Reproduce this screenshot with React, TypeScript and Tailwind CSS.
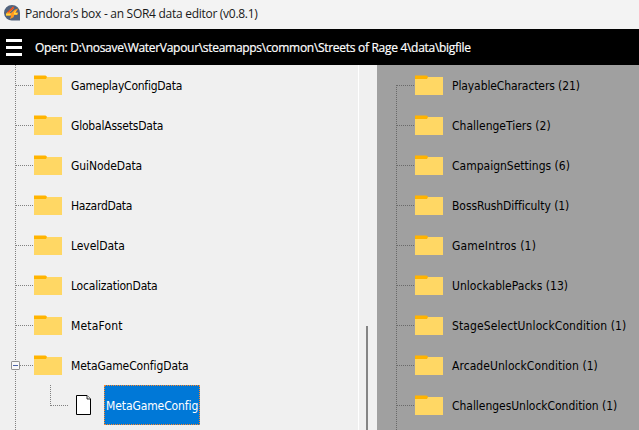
import React from "react";

type Item = { label: string; tracking: string; expanded?: boolean };

const files: Item[] = [
  { label: "GameplayConfigData", tracking: "tracking-[-0.24px]" },
  { label: "GlobalAssetsData", tracking: "tracking-[-0.2px]" },
  { label: "GuiNodeData", tracking: "tracking-[-0.1px]" },
  { label: "HazardData", tracking: "tracking-[-0.27px]" },
  { label: "LevelData", tracking: "tracking-[-0.05px]" },
  { label: "LocalizationData", tracking: "tracking-[-0.2px]" },
  { label: "MetaFont", tracking: "tracking-[0.16px]" },
  { label: "MetaGameConfigData", tracking: "tracking-[-0.1px]", expanded: true },
];

const fields: Item[] = [
  { label: "PlayableCharacters (21)", tracking: "tracking-[-0.1px]" },
  { label: "ChallengeTiers (2)", tracking: "tracking-[0px]" },
  { label: "CampaignSettings (6)", tracking: "tracking-[0px]" },
  { label: "BossRushDifficulty (1)", tracking: "tracking-[-0.06px]" },
  { label: "GameIntros (1)", tracking: "tracking-[0.18px]" },
  { label: "UnlockablePacks (13)", tracking: "tracking-[0.03px]" },
  { label: "StageSelectUnlockCondition (1)", tracking: "tracking-[0.1px]" },
  { label: "ArcadeUnlockCondition (1)", tracking: "tracking-[0.06px]" },
  { label: "ChallengesUnlockCondition (1)", tracking: "tracking-[-0.04px]" },
];

const dotsY = "bg-[repeating-linear-gradient(to_bottom,#808080_0px_1px,transparent_1px_2px)]";
const dotsX = "bg-[repeating-linear-gradient(to_right,#808080_0px_1px,transparent_1px_2px)]";
const dotsYDark = "bg-[repeating-linear-gradient(to_bottom,#696969_0px_1px,transparent_1px_2px)]";
const dotsXDark = "bg-[repeating-linear-gradient(to_right,#696969_0px_1px,transparent_1px_2px)]";

function Folder() {
  return (
    <svg className="shrink-0" width="28" height="20" viewBox="0 0 28 20">
      <path d="M0 0.4h11.5l1.5 1.4V4H0z" fill="#ffb400" />
      <path d="M0 4h12l1-2h15v18H0z" fill="#ffd764" />
    </svg>
  );
}

function AppIcon() {
  return (
    <svg className="shrink-0" width="16" height="16" viewBox="0 0 16 16">
      <path d="M8 0a8 8 0 0 1 8 8v7.5H9A7.8 7.8 0 0 1 0 8a8 8 0 0 1 8-8z" fill="#52637d" />
      <path d="M9 1.5L2 8.5v2h5.2L6 14l3.5-1.8.8-2.2h3l1-2.4h-2.6l2.5-4.2-3.6 1.3L7 8H5.5L10 3z" fill="#ff9821" />
      <path d="M9.5 1.5L3.5 7l1 .5L9.8 3z" fill="#e93b25" />
      <path d="M2 8.7h5l-.6 1.8H2zM10.5 6.5l2-1.5-1.5 3h2.5l-.6 1.4H9.6z" fill="#ffda3d" />
    </svg>
  );
}

function Collapse() {
  return (
    <svg className="absolute top-[16px] -left-[4px]" width="9" height="9" viewBox="0 0 9 9">
      <rect x=".5" y=".5" width="8" height="8" rx=".6" fill="#f8f8f8" stroke="#919191" />
      <path d="M2 4.5h5" stroke="#4b63a7" />
    </svg>
  );
}

function Row({ item, dark }: { item: Item; dark?: boolean }) {
  return (
    <div className="relative flex h-10 items-center">
      <div className={`h-px w-[18px] ml-px ${dark ? dotsXDark : dotsX}`} />
      {item.expanded && <Collapse />}
      <Folder />
      <span className={`ml-[9px] pt-[2px] whitespace-nowrap ${item.tracking}`}>{item.label}</span>
    </div>
  );
}

export default function App() {
  return (
    <div className="flex h-[430px] w-[639px] flex-col overflow-hidden bg-[#f0f0f0] text-[12px] text-black">
      <header className="flex h-[29px] shrink-0 items-center bg-[#f3f3f3] pb-[3px] pl-1 font-['Open_Sans',sans-serif] text-[12px]">
        <AppIcon />
        <span className="ml-[5px] pt-[2px] whitespace-nowrap tracking-[-0.28px] text-[#191919]">Pandora's box - an SOR4 data editor (v0.8.1)</span>
      </header>
      <nav className="flex h-9 shrink-0 items-center bg-black pl-[6px] font-['Open_Sans',sans-serif] text-white">
        <div className="flex w-4 flex-col gap-[4px]">
          <div className="h-[3px] bg-white" />
          <div className="h-[3px] bg-white" />
          <div className="h-[3px] bg-white" />
        </div>
        <span className="ml-[13px] pt-[2px] whitespace-nowrap tracking-[-0.295px] [-webkit-text-stroke:0.2px_white]">Open: D:\nosave\WaterVapour\steamapps\common\Streets of Rage 4\data\bigfile</span>
      </nav>
      <main className="flex min-h-0 flex-1 font-['DejaVu_Sans_Condensed','DejaVu_Sans',sans-serif]">
        <section className="flex w-[358px] shrink-0 pl-[15px]">
          <div className={`w-px ${dotsY}`} />
          <div className="-ml-px flex-1">
            {files.map((f) => <Row key={f.label} item={f} />)}
            <div className="flex h-10 pl-[35px]">
              <div className={`h-[21px] w-px ${dotsY}`} />
              <div className={`mt-5 h-px w-[18px] ${dotsX}`} />
              <svg className="mt-[10px] ml-[7px]" width="15" height="20" viewBox="0 0 15 20">
                <path d="M.5.5H11L14.5 4v15.5H.5z" fill="#fff" stroke="#000" />
                <path d="M11 .5V4h3.5" fill="#f0f0f0" stroke="#000" strokeWidth=".8" />
              </svg>
              <div className="ml-[13px] flex w-24 items-center border border-dotted border-[#ff8728] bg-[#0078d7] pl-px text-white">
                <span className="pt-[2px] whitespace-nowrap tracking-[-0.1px]">MetaGameConfig</span>
              </div>
            </div>
          </div>
        </section>
        <div className="flex w-[19px] shrink-0 border-l border-white pl-[7px]">
          <div className="mt-[261px] w-[2px] bg-[#858585]" />
        </div>
        <section className="flex flex-1 bg-[#a0a0a0] pl-[19px]">
          <div className={`mt-5 w-px ${dotsYDark}`} />
          <div className="-ml-px flex-1">
            {fields.map((f) => <Row key={f.label} item={f} dark />)}
          </div>
        </section>
      </main>
    </div>
  );
}
